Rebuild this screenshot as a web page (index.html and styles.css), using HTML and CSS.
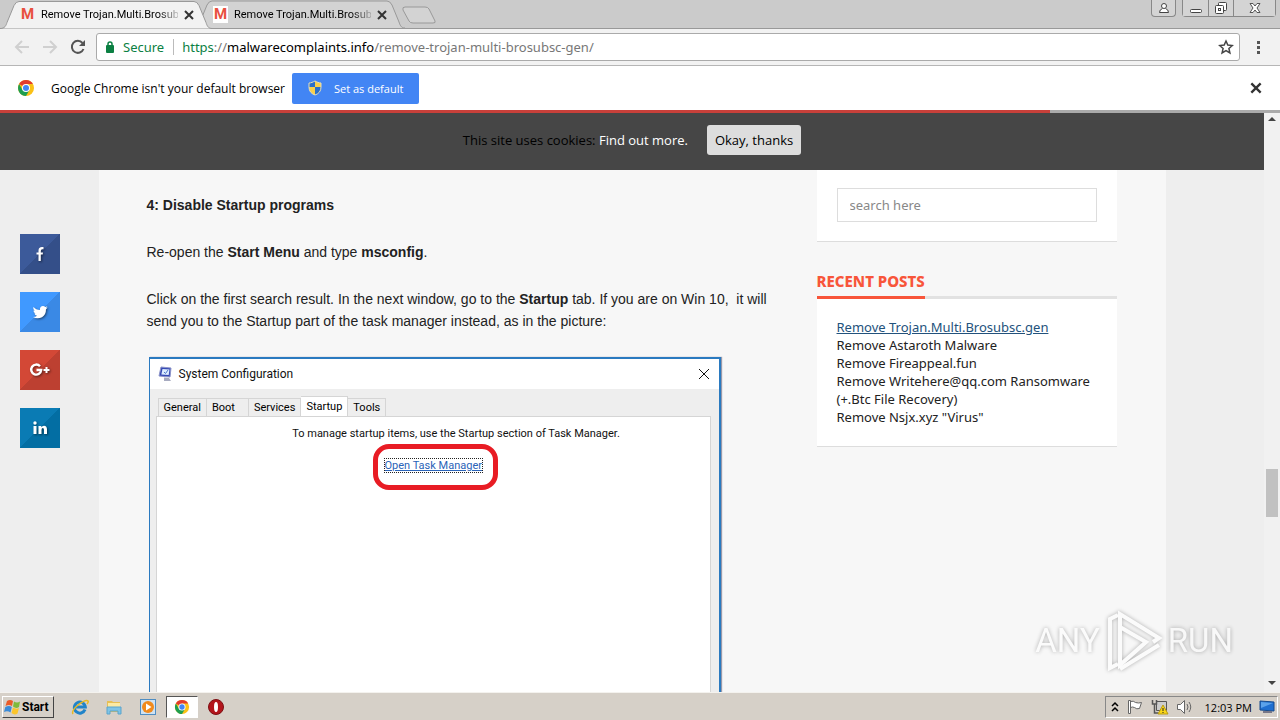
FILE: index.html
```
<!DOCTYPE html>
<html lang="en">

<head>
    <meta charset="UTF-8">
    <meta name="viewport" content="width=device-width, initial-scale=1.0">
    <title>Remove Trojan.Multi.Brosubsc.gen</title>
    <link rel="stylesheet" href="styles.css">
</head>

<body>
    <!-- Shared icons -->
    <svg class="sprite" aria-hidden="true">
        <symbol id="chrome" viewBox="0 0 18 18">
            <circle cx="9" cy="9" r="8" fill="#fbc116" />
            <path d="M9 9 2.1 5A8 8 0 0 1 15.9 5H9z" fill="#e33b2e" />
            <path d="M2.1 5A8 8 0 0 0 9 17l3.5-6L9 9 5.5 11z" fill="#1e9e50" />
            <circle cx="9" cy="9" r="4" fill="#fff" />
            <circle cx="9" cy="9" r="3" fill="#4285f4" />
        </symbol>
        <symbol id="tab-shape" viewBox="0 0 212 28">
            <path d="M0 28C5 28 6 25 7 22L14 5Q16 1 19 1H194Q197 1 199 5L206 22C207 25 208 28 212 28" stroke="#999" />
        </symbol>
        <symbol id="cross" viewBox="0 0 12 12">
            <path d="M2 2l8 8M10 2l-8 8" fill="none" stroke="#333" stroke-width="2" />
        </symbol>
    </svg>

    <!-- Tab strip -->
    <header class="tab-strip">
        <div class="tab tab-active">
            <svg class="tab-bg"><use href="#tab-shape" /></svg>
            <span class="favicon">M</span>
            <span class="tab-title">Remove Trojan.Multi.Brosub</span>
            <button class="icon-btn" aria-label="Close tab"><svg width="12" height="12"><use href="#cross" /></svg></button>
        </div>
        <div class="tab">
            <svg class="tab-bg"><use href="#tab-shape" /></svg>
            <span class="favicon favicon-white">M</span>
            <span class="tab-title">Remove Trojan.Multi.Brosub</span>
            <button class="icon-btn" aria-label="Close tab"><svg width="12" height="12"><use href="#cross" /></svg></button>
        </div>
        <button class="new-tab" aria-label="New tab">
            <svg width="36" height="20" viewBox="0 0 36 20"><path d="M4 2H24Q27 2 28 4L34 16Q35 18 32 18H12Q9 18 8 16L2 5Q1 2 4 2z" fill="#d3d3d3" stroke="#999" /></svg>
        </button>
        <div class="window-buttons">
            <button class="win-btn win-user" aria-label="Profile">
                <svg width="12" height="12" viewBox="0 0 12 12" fill="#fff" stroke="#444"><path d="M4.500 6.500Q1.500 7.500 1.500 10.500H10.500Q10.500 7.500 7.500 6.500" /><circle cx="6" cy="4" r="2.500" /></svg>
            </button>
            <div class="win-group">
                <button class="win-btn" aria-label="Minimize">
                    <svg width="12" height="12" viewBox="0 0 12 12"><rect x="0.500" y="7.500" width="11" height="3" rx="1" fill="#fff" stroke="#444" /></svg>
                </button>
                <button class="win-btn" aria-label="Restore">
                    <svg width="14" height="14" viewBox="0 0 14 14" fill="#fff" stroke="#444"><rect x="4.500" y="1.500" width="8" height="8" rx="1" /><rect x="1.500" y="4.500" width="8" height="8" rx="1" /><rect x="4.500" y="7.500" width="2" height="2" /></svg>
                </button>
                <button class="win-btn win-close" aria-label="Close">
                    <svg width="12" height="12" viewBox="0 0 12 12"><path d="M1 1.500h3l2 2.500 2-2.500h3L8 6l3 4.500H8L6 8l-2 2.500H1L4 6z" fill="#fff" stroke="#555" /></svg>
                </button>
            </div>
        </div>
    </header>

    <!-- Toolbar -->
    <nav class="toolbar">
        <button class="icon-btn" aria-label="Back"><svg width="16" height="16" viewBox="0 0 16 16"><path d="M15 8H2M8 2L2 8l6 6" fill="none" stroke="#d0d0d0" stroke-width="2" /></svg></button>
        <button class="icon-btn" aria-label="Forward"><svg width="16" height="16" viewBox="0 0 16 16"><path d="M1 8h13M8 2l6 6-6 6" fill="none" stroke="#d0d0d0" stroke-width="2" /></svg></button>
        <button class="icon-btn" aria-label="Reload"><svg width="16" height="16" viewBox="0 0 16 16"><path d="M13.500 10A6 6 0 1 1 12.500 4" fill="none" stroke="#555" stroke-width="2" /><path d="M15 1v6H9z" fill="#555" /></svg></button>
        <div class="address-bar">
            <svg width="10" height="14" viewBox="0 0 10 14"><rect x="1" y="5" width="8" height="8" rx="1" fill="#0b8043" /><path d="M3 6V4a2 2 0 0 1 4 0v2" fill="none" stroke="#0b8043" stroke-width="1.500" /></svg>
            <span class="secure">Secure</span>
            <span class="url"><span class="url-scheme">https</span>://<span class="url-host">malwarecomplaints.info</span>/remove-trojan-multi-brosubsc-gen/</span>
            <button class="icon-btn" aria-label="Bookmark"><svg width="16" height="16" viewBox="0 0 16 16"><path d="M8 2l1.800 4.100 4.500.4-3.400 3 1 4.400L8 11.600l-3.900 2.300 1-4.400-3.400-3 4.500-.4z" fill="none" stroke="#444" stroke-width="1.500" /></svg></button>
        </div>
        <button class="icon-btn" aria-label="Menu"><svg width="4" height="16" viewBox="0 0 4 16" fill="#555"><path d="M1 2h3v3H1zM1 7h3v3H1zM1 12h3v3H1z" /></svg></button>
    </nav>

    <!-- Default browser bar -->
    <div class="infobar">
        <svg width="18" height="18"><use href="#chrome" /></svg>
        <span class="infobar-text">Google Chrome isn't your default browser</span>
        <button class="default-btn">
            <svg width="14" height="16" viewBox="0 0 14 16"><path d="M7 1C5 2 3 3 1 3v4h6z" fill="#2a6fc9" /><path d="M7 1c2 1 4 2 6 2v4H7z" fill="#f8d04b" /><path d="M1 7q0 6 6 8V7z" fill="#f8d04b" /><path d="M13 7q0 6-6 8V7z" fill="#2a6fc9" /><path d="M7 1C5 2 3 3 1 3v4q0 6 6 8 6-2 6-8V3c-2 0-4-1-6-2z" fill="none" stroke="#e6dfb8" /></svg>
            Set as default
        </button>
        <button class="icon-btn infobar-close" aria-label="Dismiss"><svg width="14" height="14"><use href="#cross" /></svg></button>
    </div>

    <div class="load-line"><div class="load-done"></div></div>

    <div class="viewport">
        <div class="site">
            <div class="cookie-bar">
                <span>This site uses cookies: <a href="#">Find out more.</a></span>
                <button class="cookie-btn">Okay, thanks</button>
            </div>

            <div class="columns">
                <aside class="social">
                    <a class="share facebook" href="#" aria-label="Facebook"><svg width="20" height="20" viewBox="0 0 20 20"><path d="M8.500 17v-6.500H6.500V8.500h2V6.500Q8.500 3 12 3h1.500v2.200h-1.300Q10.800 5.200 10.800 7v1.500H13l-.3 2h-1.900V17z" fill="#fff" /></svg></a>
                    <a class="share twitter" href="#" aria-label="Twitter"><svg width="20" height="20" viewBox="0 0 20 20"><path d="M3.500 5q2.500 3 6.500 3-.5-3.500 3-4 1.300 0 2.300 1l2-.7-1.200 1.700 1.600-.4-1.700 1.700Q16 13 12 15.200 7.500 17.500 3 15q2.500 0 4-1.300-2-.2-2.700-2.100h1.200Q3.300 10.500 3.400 8.400l1.300.4Q2.700 7 3.500 5z" fill="#fff" /></svg></a>
                    <a class="share google" href="#" aria-label="Google Plus"><svg width="22" height="20" viewBox="0 0 22 20"><path d="M11 6.300A5 5 0 1 0 12.200 10H7.500" fill="none" stroke="#fff" stroke-width="2.400" /><path d="M17.500 7v6M14.500 10h6" stroke="#fff" stroke-width="2" /></svg></a>
                    <a class="share linkedin" href="#" aria-label="LinkedIn"><svg width="20" height="20" viewBox="0 0 20 20" fill="#fff"><circle cx="5" cy="5" r="1.700" /><path d="M3.500 8h3v8h-3zM8.500 8h2.800v1.200Q12.200 7.700 14 7.700q3 0 3 3.800V16h-3v-4q0-2-1.200-2-1.300 0-1.300 2v4h-3z" /></svg></a>
                </aside>

                <main class="page">
                    <article class="article">
                        <p><strong>4: Disable Startup programs</strong></p>
                        <p>Re-open the <strong>Start Menu</strong> and type <strong>msconfig</strong>.</p>
                        <p>Click on the first search result. In the next window, go to the <strong>Startup</strong> tab. If you are on Win 10,&nbsp; it will send you to the Startup part of the task manager instead, as in the picture:</p>

                        <!-- System Configuration window -->
                        <div class="dialog">
                            <div class="dialog-title">
                                <svg width="16" height="16" viewBox="0 0 16 16"><path d="M3 1l10 1-1 9-11-1z" fill="#3549b5" stroke="#8d95c9" /><path d="M4.500 3l7 .6-.8 5.400-7.400-.6z" fill="#dcecff" /><path d="M6 6l1.500 1.500L10 4" fill="none" stroke="#4a76c9" /><path d="M6 11.500l5 .5 2 3H6z" fill="#a7abc0" /></svg>
                                <span>System Configuration</span>
                                <button class="icon-btn dialog-close" aria-label="Close window"><svg width="12" height="12" viewBox="0 0 12 12"><path d="M1 1l10 10M11 1L1 11" stroke="#111" /></svg></button>
                            </div>
                            <div class="dialog-body">
                                <div class="dialog-tabs">
                                    <button class="dialog-tab">General</button>
                                    <button class="dialog-tab dialog-tab-wide">Boot</button>
                                    <button class="dialog-tab">Services</button>
                                    <button class="dialog-tab dialog-tab-active">Startup</button>
                                    <button class="dialog-tab">Tools</button>
                                </div>
                                <div class="dialog-pane">
                                    <span>To manage startup items, use the Startup section of Task Manager.</span>
                                    <div class="highlight"><a href="#">Open Task Manager</a></div>
                                </div>
                            </div>
                        </div>
                    </article>

                    <aside class="sidebar">
                        <form class="search-box">
                            <input type="text" placeholder="search here" aria-label="Search">
                        </form>
                        <h2 class="widget-title"><span>Recent Posts</span></h2>
                        <ul class="recent-posts">
                            <li><a class="hovered" href="#">Remove Trojan.Multi.Brosubsc.gen</a></li>
                            <li><a href="#">Remove Astaroth Malware</a></li>
                            <li><a href="#">Remove Fireappeal.fun</a></li>
                            <li><a href="#">Remove Writehere@qq.com Ransomware (+.Btc File Recovery)</a></li>
                            <li><a href="#">Remove Nsjx.xyz "Virus"</a></li>
                        </ul>
                    </aside>
                </main>
            </div>
        </div>

        <div class="scrollbar">
            <svg width="8" height="4" viewBox="0 0 8 4"><path d="M0 4l4-4 4 4z" fill="#444" /></svg>
            <div class="scroll-track"><div class="scroll-thumb"></div></div>
            <svg width="8" height="4" viewBox="0 0 8 4"><path d="M0 0l4 4 4-4z" fill="#444" /></svg>
        </div>

        <div class="watermark">
            <span>ANY</span>
            <svg width="58" height="64" viewBox="0 0 58 64" fill="none" stroke="#fff" stroke-width="4"><path d="M13 55L5 59V10l8-4" /><path d="M15 27V5L54 29 48 33" /><path d="M15 18V56L41 33 15 18" /><path d="M15 60L54 36" /></svg>
            <span>RUN</span>
        </div>
    </div>

    <!-- Taskbar -->
    <footer class="taskbar">
        <button class="start-btn">
            <svg width="18" height="18" viewBox="0 0 18 18"><path d="M3 3q3-2 6 0L8 8Q5 6 1.500 8z" fill="#ea5b28" /><path d="M10 3.500q3 2 6 0L15 9q-3 2-6-.5z" fill="#7fba3c" /><path d="M1.300 9Q5 7 7.800 9L6.500 14.500Q3.500 12.500 0 14z" fill="#3a8bd8" /><path d="M9 9.500q3 2 6 .5L13.500 15.500q-3 2-6-.5z" fill="#fbc52c" /></svg>
            Start
        </button>
        <button class="task" aria-label="Internet Explorer"><svg width="18" height="18" viewBox="0 0 18 18"><path d="M14 11.500A5.500 5.500 0 1 1 14.300 9H5" fill="none" stroke="#2184c9" stroke-width="3" /><path d="M2 16Q0 13 7 7q8-6 10-4 .7 1-1 3" fill="none" stroke="#e8b923" stroke-width="1.500" /></svg></button>
        <button class="task" aria-label="Explorer"><svg width="18" height="18" viewBox="0 0 18 18"><path d="M2 3h5l1 1h7v10H2z" fill="#e7bf55" /><path d="M3 5h12v6H3z" fill="#fbeaa4" /><path d="M2 9h14v7h-3v-3H5v3H2z" fill="#7fc4e6" stroke="#5aa4cc" /></svg></button>
        <button class="task" aria-label="Media Player"><svg width="18" height="18" viewBox="0 0 18 18"><rect x="1.500" y="1.500" width="15" height="15" fill="#cfe2f2" stroke="#4f8dc2" /><circle cx="9" cy="9" r="6" fill="#f18a1c" /><path d="M7 5.500L12.500 9 7 12.500z" fill="#fff" /></svg></button>
        <button class="task task-active" aria-label="Chrome"><svg width="16" height="16"><use href="#chrome" /></svg></button>
        <button class="task" aria-label="Opera"><svg width="18" height="18" viewBox="0 0 18 18"><circle cx="9" cy="9" r="7.500" fill="#b3151c" stroke="#7d1014" /><ellipse cx="9" cy="9" rx="2" ry="5" fill="#fff" /></svg></button>
        <div class="tray">
            <svg width="8" height="12" viewBox="0 0 8 12"><path d="M1 5l3-3 3 3M1 10l3-3 3 3" fill="none" stroke="#000" stroke-width="1.500" /></svg>
            <svg width="18" height="16" viewBox="0 0 18 16" fill="#fff" stroke="#666"><path d="M4.500 2.500q3-1 5 1 3 1 6 0l-2 6q-3 1-5-1-2-1-4 0z" /><path d="M2.500 1.500h2v13h-2z" /></svg>
            <svg width="18" height="16" viewBox="0 0 18 16"><path d="M5.500 2.500h10v9h-10z" fill="#ccc" stroke="#555" /><path d="M1.500 1v4h4V1M3.500 5v9h4" fill="none" stroke="#555" stroke-width="1.500" /><path d="M12 6l5 9H7z" fill="#f9d616" stroke="#b99b10" /><path d="M12 9v3M12 13v1" stroke="#222" /></svg>
            <svg width="18" height="16" viewBox="0 0 18 16" fill="none" stroke="#666"><path d="M1.500 5.500h3l4-4v13l-4-4h-3z" fill="#fff" /><path d="M11 5q2 3 0 6M13 3q3.500 5 0 10" /></svg>
            <span class="clock">12:03 PM</span>
            <svg width="16" height="14" viewBox="0 0 16 14"><path d="M1 1l14 1v9L1 10z" fill="#1f6fd0" stroke="#174b8c" /><path d="M2 2l12 1-12 5z" fill="#5ba2ea" /><path d="M4 12h9" stroke="#778" stroke-width="2" /></svg>
        </div>
    </footer>
</body>

</html>
```
FILE: styles.css
```
/* Base */
* {
    box-sizing: border-box;
}

body {
    margin: 0;
    height: 100vh;
    display: flex;
    flex-direction: column;
    overflow: hidden;
    font-family: "Open Sans", "Noto Sans", sans-serif;
    font-size: 12px;
    color: #000;
    background-color: #fff;
}

button {
    font: inherit;
    margin: 0;
    padding: 0;
    border: none;
    background: none;
    cursor: pointer;
}

svg {
    display: block;
    flex: none;
}

.sprite {
    position: absolute;
    width: 0;
    height: 0;
}

.icon-btn {
    display: flex;
    flex: none;
}

/* Tab strip */
.tab-strip {
    display: flex;
    flex: none;
    height: 29px;
    background-color: #cbcbcb;
    border-bottom: 1px solid #999;
}

.tab {
    position: relative;
    display: flex;
    align-items: center;
    width: 212px;
    height: 29px;
    padding: 0 17px 0 20px;
    margin-right: -19px;
}

.tab-active {
    z-index: 1;
}

.tab-bg {
    position: absolute;
    left: 0;
    top: 0;
    width: 212px;
    height: 28px;
    fill: #d3d3d3;
}

.tab-active .tab-bg {
    height: 29px;
    fill: #f2f2f2;
}

.favicon,
.tab-title,
.tab .icon-btn {
    position: relative;
}

.favicon {
    width: 15px;
    font-family: Roboto, sans-serif;
    font-size: 15px;
    line-height: 17px;
    font-weight: 700;
    text-align: center;
    color: #e8503f;
}

.favicon-white {
    background-color: #fff;
}

.tab-title {
    flex: 1;
    margin: 0 5px 0 6px;
    font-family: Roboto, sans-serif;
    font-size: 11px;
    white-space: nowrap;
    overflow: hidden;
    -webkit-mask-image: linear-gradient(to right, #000 85%, rgba(0, 0, 0, 0.2));
    mask-image: linear-gradient(to right, #000 85%, rgba(0, 0, 0, 0.2));
}

.new-tab {
    margin-left: 15px;
    height: 30px;
}

.window-buttons {
    display: flex;
    gap: 6px;
    margin-left: auto;
    margin-right: 4px;
}

.win-group {
    display: flex;
    border: 1px solid #888;
    border-top: none;
    border-radius: 0 0 4px 4px;
    height: 17px;
}

.win-btn {
    display: flex;
    align-items: center;
    justify-content: center;
    width: 25px;
    background-color: #d4d4d4;
}

.win-btn + .win-btn {
    border-left: 1px solid #888;
}

.win-user {
    height: 17px;
    border: 1px solid #888;
    border-top: none;
    border-radius: 0 0 4px 4px;
}

.win-close {
    width: 42px;
}

/* Toolbar */
.toolbar {
    display: flex;
    flex: none;
    align-items: center;
    gap: 12px;
    height: 37px;
    padding: 0 20px 0 14px;
    background-color: #f2f2f2;
    border-bottom: 1px solid #b6b6b6;
}

.toolbar > .icon-btn:last-child {
    margin-left: 4px;
}

.address-bar {
    display: flex;
    flex: 1;
    align-items: center;
    height: 28px;
    margin-left: -2px;
    padding: 0 5px 0 8px;
    font-family: "Noto Sans", sans-serif;
    font-size: 13px;
    background-color: #fff;
    border: 1px solid #aaa;
    border-radius: 3px;
}

.secure {
    margin-left: 8px;
    padding-right: 9px;
    line-height: 16px;
    color: #0b8043;
    border-right: 1px solid #bbb;
}

.url {
    flex: 1;
    margin-left: 8px;
    color: #777;
}

.url-scheme {
    color: #0b8043;
}

.url-host {
    color: #000;
}

/* Default browser bar */
.infobar {
    display: flex;
    flex: none;
    align-items: center;
    height: 44px;
    padding: 0 17px;
    background-color: #fff;
}

.infobar-text {
    margin: 0 7px 0 16px;
}

.default-btn {
    display: flex;
    align-items: center;
    gap: 12px;
    height: 31px;
    padding: 0 16px;
    font-size: 11px;
    color: #fff;
    background-color: #4285f4;
    border-radius: 2px;
}

.infobar-close {
    margin-left: auto;
}

.load-line {
    flex: none;
    height: 3px;
    background-color: #aaa;
}

.load-done {
    width: 82%;
    height: 3px;
    background-color: #c8403a;
}

/* Page area */
.viewport {
    position: relative;
    display: flex;
    flex: 1;
    min-height: 0;
}

.site {
    display: flex;
    flex: 1;
    flex-direction: column;
    overflow: hidden;
    background-color: #eee;
}

.cookie-bar {
    display: flex;
    flex: none;
    align-items: flex-start;
    justify-content: center;
    gap: 19px;
    height: 57px;
    padding-top: 12px;
    font-size: 13px;
    line-height: 30px;
    background-color: #464646;
}

.cookie-bar a {
    color: #fff;
    text-decoration: none;
}

.cookie-btn {
    padding: 0 8px;
    background-color: #ddd;
    border-radius: 3px;
}

.columns {
    display: grid;
    flex: 1;
    grid-template-columns: 1fr minmax(0, 1067px) 1fr;
    min-height: 0;
}

.social {
    display: flex;
    flex-direction: column;
    gap: 18px;
    padding: 64px 0 0 20px;
}

.share {
    display: flex;
    align-items: center;
    justify-content: center;
    width: 40px;
    height: 40px;
}

.share svg {
    filter: drop-shadow(1px 1px 1px rgba(0, 0, 0, 0.5));
}

.facebook {
    background: linear-gradient(135deg, #3c5a9a 50%, #344f89 50%);
}

.twitter {
    background: linear-gradient(135deg, #4099ff 50%, #3a89e5 50%);
}

.google {
    background: linear-gradient(135deg, #d34836 50%, #bd4031 50%);
}

.linkedin {
    background: linear-gradient(135deg, #0a7bb4 50%, #036ea3 50%);
}

.page {
    display: grid;
    grid-template-columns: minmax(0, 630px) 300px;
    justify-content: space-between;
    padding: 0 49px 0 48px;
    overflow: hidden;
    background-color: #f7f7f7;
}

/* Article */
.article {
    padding-top: 24px;
    font-family: "Liberation Sans", Arial, sans-serif;
    font-size: 14px;
    line-height: 22px;
    color: #222;
}

.article p {
    margin: 0 0 25px;
}

.dialog {
    display: flex;
    flex-direction: column;
    width: 572px;
    max-width: 100%;
    height: 420px;
    margin-left: 2px;
    font-family: Roboto, "Noto Sans", sans-serif;
    font-size: 11px;
    line-height: 16px;
    color: #111;
    background-color: #eee;
    border: 2px solid #2a7ac0;
    border-left-width: 1px;
    box-shadow: 1px 0 1px #99a;
}

.dialog-title {
    display: flex;
    align-items: center;
    gap: 5px;
    height: 30px;
    padding: 0 9px 0 8px;
    font-size: 12px;
    background-color: #fff;
}

.dialog-close {
    margin-left: auto;
}

.dialog-body {
    display: flex;
    flex: 1;
    flex-direction: column;
    padding: 7px 8px 0 6px;
}

.dialog-tabs {
    display: flex;
    align-items: flex-end;
    padding-left: 2px;
}

.dialog-tab {
    height: 18px;
    padding: 0 5px;
    border: 1px solid #d5d5d5;
    border-bottom: none;
    border-left-width: 0;
}

.dialog-tab:first-child {
    border-left-width: 1px;
}

.dialog-tab-wide {
    padding-right: 13px;
}

.dialog-tab-active {
    height: 20px;
    background-color: #fff;
}

.dialog-pane {
    display: flex;
    flex: 1;
    flex-direction: column;
    align-items: center;
    gap: 2px;
    padding-top: 9px;
    padding-left: 46px;
    background-color: #fff;
    border: 1px solid #d5d5d5;
}

.highlight {
    align-self: flex-start;
    margin-left: 170px;
    padding: 10px 11px 13px 7px;
    border: 5px solid #e81c24;
    border-radius: 16px;
}

.highlight a {
    display: block;
    line-height: 13px;
    color: #2a63b8;
    outline: 1px dotted #222;
}

/* Sidebar */
.sidebar {
    font-family: "Noto Sans", "Open Sans", sans-serif;
    font-size: 13px;
    line-height: 18px;
}

.search-box {
    padding: 18px 20px 19px;
    background-color: #fff;
    border-bottom: 1px solid #ddd;
}

.search-box input {
    display: block;
    width: 100%;
    height: 34px;
    padding: 0 12px;
    font: inherit;
    border: 1px solid #ddd;
}

.search-box input::placeholder {
    color: #888;
}

.widget-title {
    display: flex;
    margin: 28px 0 0;
    font-size: 15px;
    line-height: 22px;
    font-weight: 800;
    text-transform: uppercase;
    color: #f8553a;
    border-bottom: 3px solid #e2e2e2;
}

.widget-title span {
    padding-bottom: 4px;
    margin-bottom: -3px;
    border-bottom: 3px solid #f8553a;
}

.recent-posts {
    margin: 0;
    padding: 19px 20px 20px;
    list-style: none;
    background-color: #fff;
    border-bottom: 1px solid #ddd;
}

.recent-posts a {
    color: #222;
    text-decoration: none;
}

.recent-posts .hovered {
    color: #23527c;
    text-decoration: underline;
}

/* Scrollbar */
.scrollbar {
    display: flex;
    flex-direction: column;
    align-items: center;
    width: 16px;
    padding: 4px 0 7px;
    background-color: #f1f1f1;
}

.scroll-track {
    display: flex;
    flex: 1;
    flex-direction: column;
    justify-content: flex-end;
    width: 12px;
    padding-bottom: 164px;
}

.scroll-thumb {
    height: 48px;
    background-color: #c1c1c1;
}

/* Watermark over the page */
.watermark {
    position: absolute;
    right: 47px;
    bottom: 19px;
    display: flex;
    align-items: center;
    gap: 5px;
    font-family: Roboto, sans-serif;
    font-size: 33px;
    line-height: 64px;
    color: #fff;
    opacity: 0.6;
    filter: drop-shadow(0 0 2px rgba(0, 0, 0, 0.5));
    pointer-events: none;
}

/* Taskbar */
.taskbar {
    display: flex;
    flex: none;
    align-items: center;
    height: 28px;
    padding: 1px 2px 0;
    background-color: #d6d0c8;
    border-top: 1px solid #f4f2ee;
}

.start-btn {
    display: flex;
    align-items: center;
    height: 22px;
    width: 52px;
    margin-right: 10px;
    padding-left: 1px;
    font-family: Roboto, sans-serif;
    font-size: 12px;
    font-weight: 700;
    border: 1px solid #fff;
    border-right-color: #444;
    border-bottom-color: #444;
}

.task {
    display: flex;
    align-items: center;
    justify-content: center;
    width: 32px;
    height: 22px;
    margin-right: 2px;
}

.task-active {
    background-color: #fff;
    border: 1px solid #555;
    border-right-color: #fff;
    border-bottom-color: #fff;
}

.tray {
    display: flex;
    align-items: center;
    gap: 7px;
    height: 22px;
    margin-left: auto;
    padding: 0 2px 0 5px;
    border: 1px solid #888;
    border-right-color: #fff;
    border-bottom-color: #fff;
}

.clock {
    margin-left: 4px;
    font-size: 11px;
}
```
